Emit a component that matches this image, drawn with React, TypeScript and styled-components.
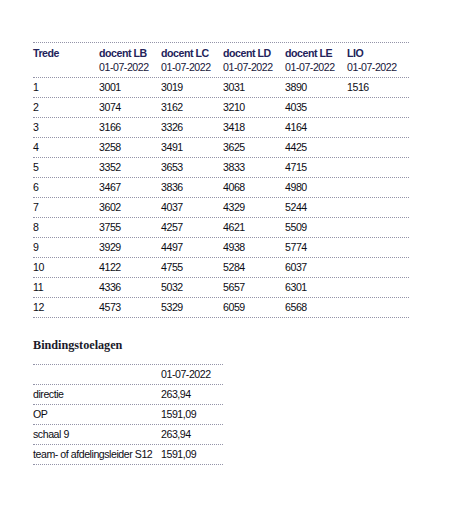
import styled, { createGlobalStyle } from 'styled-components'

const GlobalStyle = createGlobalStyle`
  body {
    margin: 0;
    background: #ffffff;
    font-family: "Liberation Sans", Arial, sans-serif;
  }
`

const scales = [
  { trede: '1', values: ['3001', '3019', '3031', '3890', '1516'] },
  { trede: '2', values: ['3074', '3162', '3210', '4035', ''] },
  { trede: '3', values: ['3166', '3326', '3418', '4164', ''] },
  { trede: '4', values: ['3258', '3491', '3625', '4425', ''] },
  { trede: '5', values: ['3352', '3653', '3833', '4715', ''] },
  { trede: '6', values: ['3467', '3836', '4068', '4980', ''] },
  { trede: '7', values: ['3602', '4037', '4329', '5244', ''] },
  { trede: '8', values: ['3755', '4257', '4621', '5509', ''] },
  { trede: '9', values: ['3929', '4497', '4938', '5774', ''] },
  { trede: '10', values: ['4122', '4755', '5284', '6037', ''] },
  { trede: '11', values: ['4336', '5032', '5657', '6301', ''] },
  { trede: '12', values: ['4573', '5329', '6059', '6568', ''] },
]

const columns = ['docent LB', 'docent LC', 'docent LD', 'docent LE', 'LIO']

const allowances = [
  { label: 'directie', value: '263,94' },
  { label: 'OP', value: '1591,09' },
  { label: 'schaal 9', value: '263,94' },
  { label: 'team- of afdelingsleider S12', value: '1591,09' },
]

export default function App() {
  return (
    <Page>
      <GlobalStyle />
      <ScaleTable>
        <HeaderRow>
          <HeadCell>
            <HeadName>Trede</HeadName>
          </HeadCell>
          {columns.map((c) => (
            <HeadCell key={c}>
              <HeadName>{c}</HeadName>
              <HeadDate>01-07-2022</HeadDate>
            </HeadCell>
          ))}
        </HeaderRow>
        {scales.map((row) => (
          <Row key={row.trede}>
            <Cell>{row.trede}</Cell>
            {row.values.map((v, i) => (
              <Cell key={i}>{v}</Cell>
            ))}
          </Row>
        ))}
      </ScaleTable>

      <Title>Bindingstoelagen</Title>

      <AllowanceTable>
        <AllowanceRow>
          <Cell />
          <Cell>01-07-2022</Cell>
        </AllowanceRow>
        {allowances.map((a) => (
          <AllowanceRow key={a.label}>
            <Cell>{a.label}</Cell>
            <Cell>{a.value}</Cell>
          </AllowanceRow>
        ))}
      </AllowanceTable>
    </Page>
  )
}

const Page = styled.div`
  padding: 42px 0 40px 33px;
  color: #0c0c14;
  font-size: 10.6px;
  letter-spacing: -0.45px;
`
const dotted = `1px dotted #9494a8`

const ScaleTable = styled.div`
  width: 376px;
  border-top: ${dotted};
`
const HeaderRow = styled.div`
  display: grid;
  grid-template-columns: 66px repeat(5, 62px);
  height: 28px;
  padding: 3px 0;
  border-bottom: ${dotted};
  box-sizing: content-box;
`
const HeadCell = styled.div`
  display: flex;
  flex-direction: column;
  line-height: 14px;
`
const HeadName = styled.span`
  font-weight: 700;
  color: #23235a;
`
const HeadDate = styled.span`
  color: #16163a;
`
const Row = styled.div`
  display: grid;
  grid-template-columns: 66px repeat(5, 62px);
  height: 19px;
  align-items: center;
  border-bottom: ${dotted};
`
const Cell = styled.div`
  white-space: nowrap;
  line-height: 19px;
`
const Title = styled.h2`
  margin: 19px 0 11px;
  font-family: "Liberation Serif", serif;
  font-weight: 700;
  font-size: 12.2px;
  line-height: 16px;
  letter-spacing: 0;
  color: #1a1a2a;
`
const AllowanceTable = styled.div`
  width: 190px;
  border-top: ${dotted};
`
const AllowanceRow = styled.div`
  display: grid;
  grid-template-columns: 128px 62px;
  height: 19px;
  align-items: center;
  border-bottom: ${dotted};
`
